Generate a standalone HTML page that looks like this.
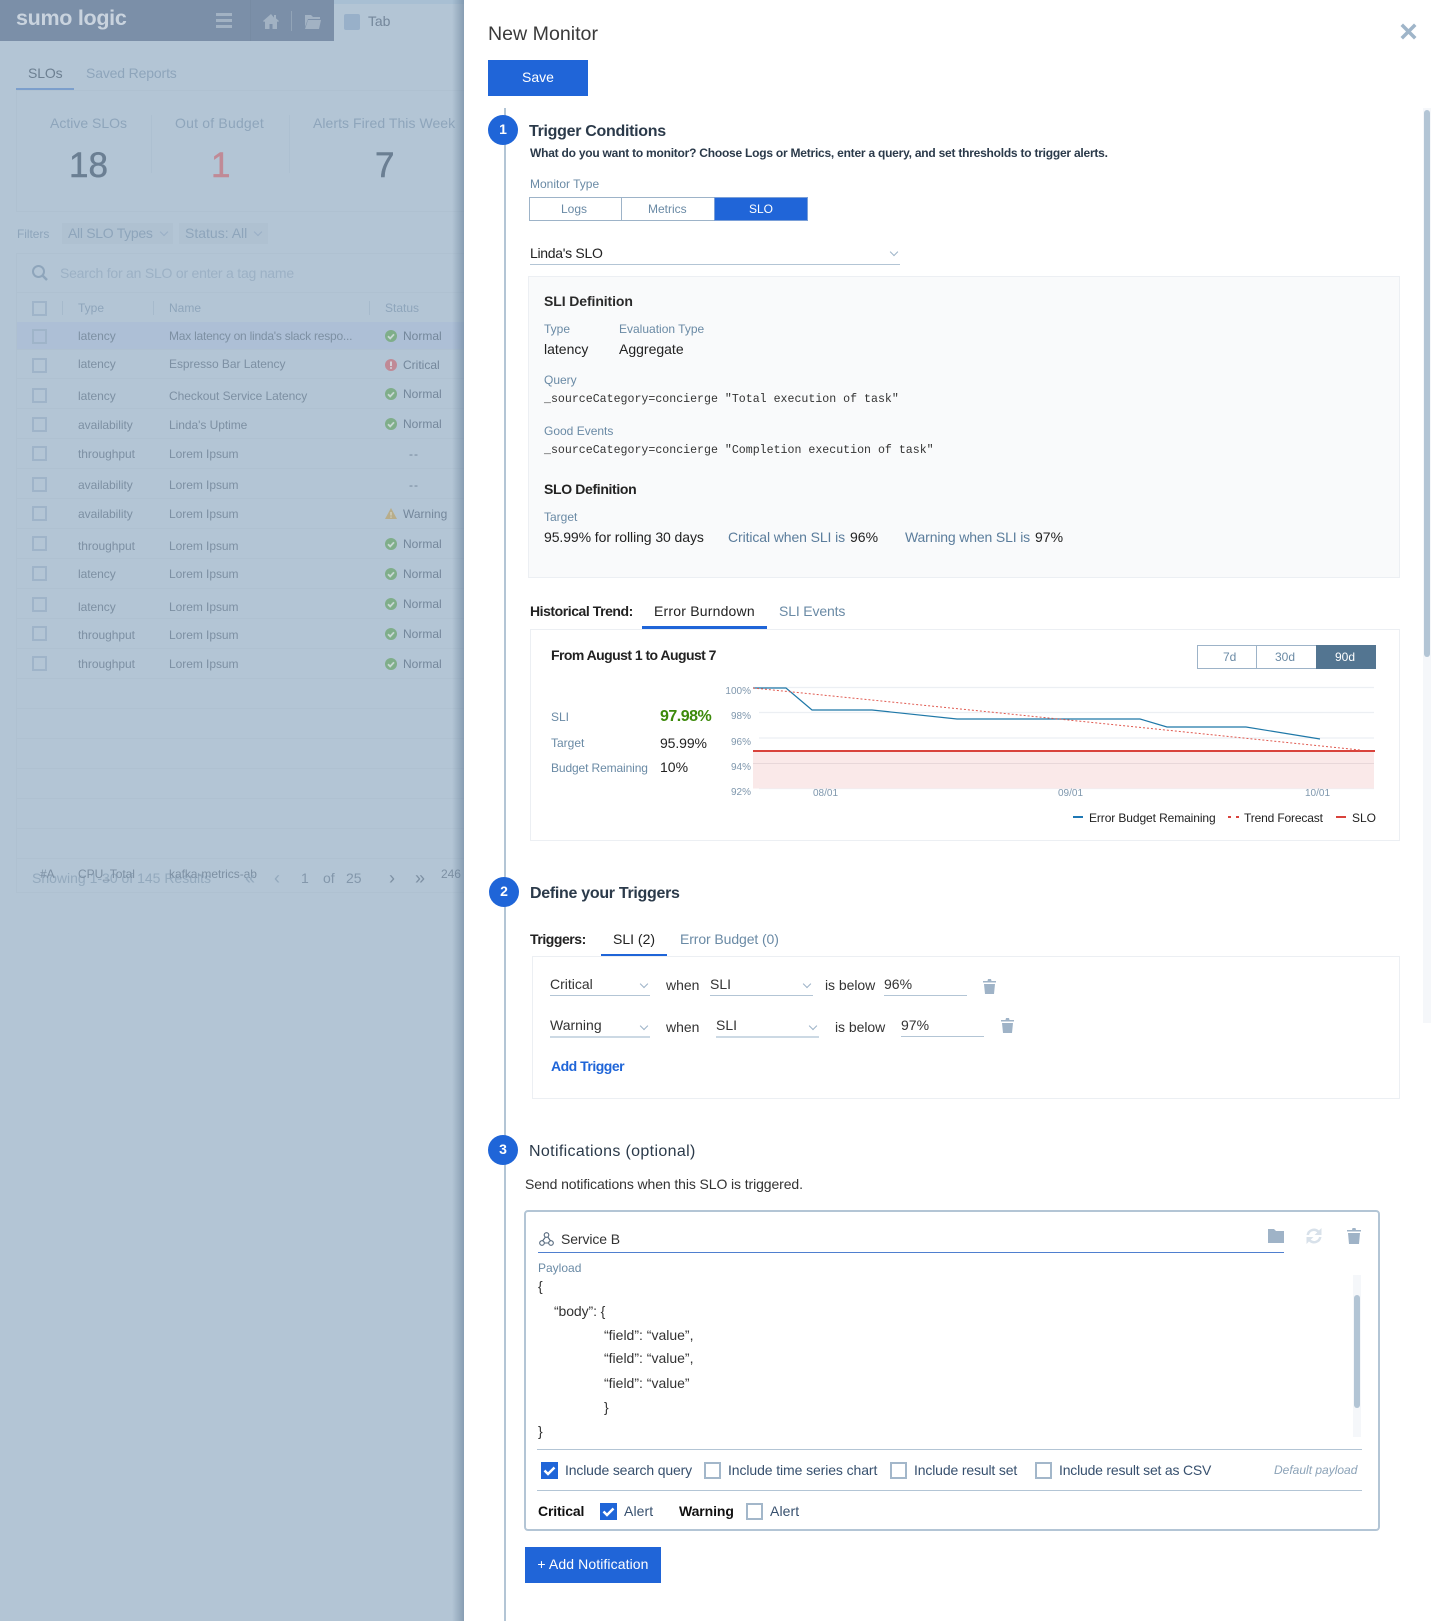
<!DOCTYPE html>
<html><head><meta charset="utf-8"><title>New Monitor</title>
<style>
html,body{margin:0;padding:0}
body{width:1440px;height:1621px;position:relative;overflow:hidden;background:#fff;font-family:"Liberation Sans",sans-serif;color:#222}
.t{position:absolute;white-space:nowrap;line-height:20px;font-size:14px}
.b{position:absolute}
.l{color:#8296ab;font-size:12px}
.s{color:#6a8aa5;font-size:12px}
.m{font-family:"Liberation Mono",monospace;font-size:11.6px;color:#333}
.g{color:#7d90a3;font-size:12px;letter-spacing:-.05px}
.st{color:#74879b;font-size:12px}
.cb{position:absolute;left:32px;width:11px;height:11px;border:2px solid #9fb4c9}
.ln{position:absolute;left:16px;width:448px;height:1px;background:#afc1d1}
.ch{position:absolute;width:5px;height:5px;border-right:1px solid #9db3c8;border-bottom:1px solid #9db3c8;transform:rotate(45deg)}
.u{position:absolute;height:1px;background:#b3c5d5}
.sv{position:absolute;overflow:visible}
.num{position:absolute;width:30px;height:30px;border-radius:50%;background:#1f65d8;color:#fff;font-size:14px;font-weight:bold;text-align:center;line-height:29px}
.h{font-size:16px;font-weight:bold;color:#2b3a4a;letter-spacing:-.3px}
.md{font-weight:bold;font-size:14px;color:#222;letter-spacing:-.35px}
.c{position:absolute;width:13px;height:13px;border:2px solid #a3b7ca;background:#fff}
.k{position:absolute;width:17px;height:17px;background:#1f65d8}
.in{color:#37506e;font-size:14px;letter-spacing:-.15px}
.big{font-size:35px;line-height:40px;-webkit-text-stroke:.5px currentColor}
</style></head><body>

<!-- LEFT dimmed app -->
<div class="b" style="left:0;top:0;width:464px;height:1621px;background:#b3c5d5"></div>
<div class="b" style="left:334px;top:0;width:130px;height:4px;background:#a8bfd3"></div>
<div class="b" style="left:0;top:0;width:334px;height:41px;background:#7b8fa8"></div>
<div class="b" style="left:250px;top:0;width:1px;height:41px;background:#778ba3"></div>
<div class="t" style="left:16px;top:8px;font-size:21.500px;font-weight:bold;color:#c9d3de;letter-spacing:-.3px">sumo logic</div>
<svg class="sv" style="left:216px;top:13px" width="16" height="15"><path d="M0 0h16v3H0zM0 6h16v3H0zM0 12h16v3H0z" fill="#a2b2c3"/></svg>
<svg class="sv" style="left:263px;top:14px" width="16" height="15"><path d="M8 0L0 7l1 1 1-.6V15h4.500v-5h3v5H14V7.400l1 .6 1-1-3-2.600V1h-2v2.600z" fill="#a2b2c3"/></svg>
<div class="b" style="left:291px;top:11px;width:1px;height:20px;background:#92a4b7"></div>
<svg class="sv" style="left:305px;top:14px" width="16" height="15"><path d="M0 1h6l2 2h7v2H3L0 13zM3 6h13l-2 9H0z" fill="#a2b2c3"/></svg>
<div class="b" style="left:344px;top:14px;width:16px;height:16px;background:#98b0c9;border-radius:2px"></div>
<div class="t" style="left:368px;top:11px;color:#74879b;letter-spacing:-.1px">Tab</div>

<div class="t" style="left:28px;top:63px;color:#6d8092;letter-spacing:-.15px">SLOs</div>
<div class="t" style="left:86px;top:63px;color:#8ea5bb;letter-spacing:-.15px">Saved Reports</div>
<div class="b" style="left:16px;top:88px;width:58px;height:3px;background:#7c9fcc"></div>
<div class="b" style="left:16px;top:90px;width:448px;height:122px;border:1px solid #afc1d1;border-right:0;box-sizing:border-box"></div>
<div class="b" style="left:151px;top:115px;width:1px;height:58px;background:#adc0d1"></div>
<div class="b" style="left:289px;top:115px;width:1px;height:58px;background:#adc0d1"></div>
<div class="t" style="left:50px;top:113px;color:#8ea5bb">Active SLOs</div>
<div class="t" style="left:175px;top:113px;color:#8ea5bb;letter-spacing:.2px">Out of Budget</div>
<div class="t" style="left:313px;top:113px;color:#8ea5bb;letter-spacing:.05px">Alerts Fired This Week</div>
<div class="t big" style="left:69px;top:146px;color:#6b7f93">18</div>
<div class="t big" style="left:211px;top:146px;color:#c08a96">1</div>
<div class="t big" style="left:375px;top:146px;color:#6b7f93">7</div>

<div class="t g" style="left:17px;top:224px;color:#8ea5bb">Filters</div>
<div class="b" style="left:62px;top:223px;width:111px;height:21px;background:#afc1d1"></div>
<div class="b" style="left:179px;top:223px;width:89px;height:21px;background:#afc1d1"></div>
<div class="t" style="left:68px;top:223px;color:#8ea5bb;letter-spacing:-.3px">All SLO Types</div>
<div class="t" style="left:185px;top:223px;color:#8ea5bb">Status: All</div>
<div class="ch" style="left:161px;top:229px;border-color:#99afc6"></div>
<div class="ch" style="left:255px;top:229px;border-color:#99afc6"></div>

<div class="b" style="left:16px;top:253px;width:448px;height:40px;border:1px solid #afc1d1;border-right:0;box-sizing:border-box"></div>
<svg class="sv" style="left:32px;top:265px" width="16" height="16"><circle cx="6.500" cy="6.500" r="5.500" fill="none" stroke="#8ea5bb" stroke-width="2"/><path d="M10.500 10.500L15 15" stroke="#8ea5bb" stroke-width="2.500"/></svg>
<div class="t" style="left:60px;top:263px;color:#9cb1c5;letter-spacing:-.22px">Search for an SLO or enter a tag name</div>

<div class="cb" style="top:301px"></div>
<div class="b" style="left:62px;top:301px;width:1px;height:14px;background:#a6bacc"></div>
<div class="b" style="left:153px;top:301px;width:1px;height:14px;background:#a6bacc"></div>
<div class="b" style="left:369px;top:301px;width:1px;height:14px;background:#a6bacc"></div>
<div class="t s" style="left:78px;top:298px;color:#8ea5bb">Type</div>
<div class="t s" style="left:169px;top:298px;color:#8ea5bb">Name</div>
<div class="t s" style="left:385px;top:298px;color:#8ea5bb">Status</div>

<div class="b" style="left:16px;top:322px;width:448px;height:27px;background:#adbfd6"></div>
<div class="ln" style="top:349px"></div><div class="ln" style="top:378px"></div><div class="ln" style="top:408px"></div><div class="ln" style="top:438px"></div><div class="ln" style="top:468px"></div><div class="ln" style="top:498px"></div><div class="ln" style="top:528px"></div><div class="ln" style="top:558px"></div><div class="ln" style="top:588px"></div><div class="ln" style="top:618px"></div><div class="ln" style="top:648px"></div><div class="ln" style="top:678px"></div><div class="ln" style="top:708px"></div><div class="ln" style="top:738px"></div><div class="ln" style="top:768px"></div><div class="ln" style="top:798px"></div><div class="ln" style="top:828px"></div><div class="ln" style="top:858px"></div><div class="ln" style="top:892px"></div>
<div class="b" style="left:16px;top:293px;width:1px;height:600px;background:#afc1d1"></div>

<div class="cb" style="top:329px"></div><div class="t g" style="left:78px;top:326px">latency</div><div class="t g" style="left:169px;top:326px;letter-spacing:-.23px">Max latency on linda's slack respo...</div>
<div class="cb" style="top:358px"></div><div class="t g" style="left:78px;top:354px">latency</div><div class="t g" style="left:169px;top:354px">Espresso Bar Latency</div>
<div class="cb" style="top:388px"></div><div class="t g" style="left:78px;top:386px">latency</div><div class="t g" style="left:169px;top:386px">Checkout Service Latency</div>
<div class="cb" style="top:417px"></div><div class="t g" style="left:78px;top:415px">availability</div><div class="t g" style="left:169px;top:415px">Linda's Uptime</div>
<div class="cb" style="top:446px"></div><div class="t g" style="left:78px;top:444px">throughput</div><div class="t g" style="left:169px;top:444px">Lorem Ipsum</div>
<div class="cb" style="top:477px"></div><div class="t g" style="left:78px;top:475px">availability</div><div class="t g" style="left:169px;top:475px">Lorem Ipsum</div>
<div class="cb" style="top:506px"></div><div class="t g" style="left:78px;top:504px">availability</div><div class="t g" style="left:169px;top:504px">Lorem Ipsum</div>
<div class="cb" style="top:536px"></div><div class="t g" style="left:78px;top:536px">throughput</div><div class="t g" style="left:169px;top:536px">Lorem Ipsum</div>
<div class="cb" style="top:566px"></div><div class="t g" style="left:78px;top:564px">latency</div><div class="t g" style="left:169px;top:564px">Lorem Ipsum</div>
<div class="cb" style="top:597px"></div><div class="t g" style="left:78px;top:597px">latency</div><div class="t g" style="left:169px;top:597px">Lorem Ipsum</div>
<div class="cb" style="top:626px"></div><div class="t g" style="left:78px;top:625px">throughput</div><div class="t g" style="left:169px;top:625px">Lorem Ipsum</div>
<div class="cb" style="top:656px"></div><div class="t g" style="left:78px;top:654px">throughput</div><div class="t g" style="left:169px;top:654px">Lorem Ipsum</div>

<svg width="0" height="0" style="position:absolute"><defs><g id="ok"><circle cx="6" cy="6" r="6" fill="#7fae8a"/><path d="M3 6.200l2.200 2.200L9 4.300" fill="none" stroke="#c8d8d4" stroke-width="1.800"/></g></defs></svg>
<svg class="sv" style="left:385px;top:330px" width="12" height="12"><use href="#ok"/></svg><div class="t st" style="left:403px;top:326px">Normal</div>
<svg class="sv" style="left:385px;top:359px" width="12" height="12"><circle cx="6" cy="6" r="6" fill="#c08a96"/><path d="M6 2.500v4.500M6 8.200v1.500" stroke="#d5d9e0" stroke-width="1.800"/></svg><div class="t st" style="left:403px;top:355px">Critical</div>
<svg class="sv" style="left:385px;top:388px" width="12" height="12"><use href="#ok"/></svg><div class="t st" style="left:403px;top:384px">Normal</div>
<svg class="sv" style="left:385px;top:418px" width="12" height="12"><use href="#ok"/></svg><div class="t st" style="left:403px;top:414px">Normal</div>
<div class="t st" style="left:409px;top:444px;letter-spacing:1px">--</div>
<div class="t st" style="left:409px;top:475px;letter-spacing:1px">--</div>
<svg class="sv" style="left:385px;top:508px" width="12" height="11"><path d="M6 0l6 11H0z" fill="#b8ad8a"/><path d="M6 4v3.500M6 8.500v1.200" stroke="#d5d6c8" stroke-width="1.200"/></svg><div class="t st" style="left:403px;top:504px">Warning</div>
<svg class="sv" style="left:385px;top:538px" width="12" height="12"><use href="#ok"/></svg><div class="t st" style="left:403px;top:534px">Normal</div>
<svg class="sv" style="left:385px;top:568px" width="12" height="12"><use href="#ok"/></svg><div class="t st" style="left:403px;top:564px">Normal</div>
<svg class="sv" style="left:385px;top:598px" width="12" height="12"><use href="#ok"/></svg><div class="t st" style="left:403px;top:594px">Normal</div>
<svg class="sv" style="left:385px;top:628px" width="12" height="12"><use href="#ok"/></svg><div class="t st" style="left:403px;top:624px">Normal</div>
<svg class="sv" style="left:385px;top:658px" width="12" height="12"><use href="#ok"/></svg><div class="t st" style="left:403px;top:654px">Normal</div>

<div class="t" style="left:32px;top:868px;color:#93a9bd;font-size:14px">Showing 1-30 of 145 Results</div>
<div class="t g" style="left:40px;top:864px">#A</div>
<div class="t g" style="left:78px;top:864px">CPU_Total</div>
<div class="t g" style="left:169px;top:864px">kafka-metrics-ab</div>
<div class="t g" style="left:441px;top:864px">246</div>
<div class="t" style="left:245px;top:868px;color:#93a9bd;font-size:18px">«</div>
<div class="t" style="left:274px;top:868px;color:#93a9bd;font-size:18px">‹</div>
<div class="t" style="left:301px;top:868px;color:#8397ab">1</div>
<div class="t" style="left:323px;top:868px;color:#8397ab">of</div>
<div class="t" style="left:346px;top:868px;color:#8397ab">25</div>
<div class="t" style="left:389px;top:868px;color:#7d90a3;font-size:18px">›</div>
<div class="t" style="left:415px;top:868px;color:#7d90a3;font-size:18px">»</div>

<!-- Panel shadow -->
<div class="b" style="left:452px;top:0;width:12px;height:1621px;background:linear-gradient(to right,rgba(100,125,150,0),rgba(100,125,150,.55))"></div>

<!-- RIGHT panel -->
<div class="b" style="left:464px;top:0;width:976px;height:1621px;background:#fff"></div>
<div class="b" style="left:1423px;top:108px;width:8px;height:915px;background:#f5f7fa"></div>
<div class="b" style="left:1424px;top:110px;width:6px;height:547px;background:#b3c5d5;border-radius:3px"></div>
<svg class="sv" style="left:1401px;top:24px" width="15" height="15"><path d="M2 2l11 11M13 2L2 13" stroke="#9fb5c9" stroke-width="3.500" stroke-linecap="square"/></svg>

<div class="t" style="left:488px;top:24px;font-size:19.600px;color:#3a3a3a">New Monitor</div>
<div class="b" style="left:488px;top:60px;width:100px;height:36px;background:#2065d8;color:#fff;font-size:14px;text-align:center;line-height:34px">Save</div>

<div class="b" style="left:504px;top:108px;width:1.500px;height:1513px;background:#b3c5d5"></div>
<div class="num" style="left:488px;top:115px">1</div>
<div class="t h" style="left:529px;top:122px">Trigger Conditions</div>
<div class="t" style="left:530px;top:143px;font-size:12px;font-weight:bold;color:#2b3a4a;letter-spacing:-.23px">What do you want to monitor? Choose Logs or Metrics, enter a query, and set thresholds to trigger alerts.</div>
<div class="t s" style="left:530px;top:174px">Monitor Type</div>
<div class="b" style="left:529px;top:197px;width:278px;height:24px;border:1px solid #9db3c8;box-sizing:border-box"></div>
<div class="b" style="left:621px;top:197px;width:1px;height:24px;background:#9db3c8"></div>
<div class="b" style="left:714px;top:197px;width:94px;height:24px;background:#2065d8;border:1px solid #7a9fd8;box-sizing:border-box"></div>
<div class="t s" style="left:561px;top:199px">Logs</div>
<div class="t s" style="left:648px;top:199px">Metrics</div>
<div class="t" style="left:749px;top:199px;font-size:12px;color:#fff">SLO</div>
<div class="t" style="left:530px;top:243px;letter-spacing:-.3px">Linda's SLO</div>
<div class="ch" style="left:891px;top:249px"></div>
<div class="u" style="left:530px;top:264px;width:370px"></div>

<div class="b" style="left:528px;top:276px;width:872px;height:302px;background:#f9fafb;border:1px solid #eceff3;box-sizing:border-box"></div>
<div class="t md" style="left:544px;top:291px;letter-spacing:-.1px;font-weight:bold;color:#2a2a2a">SLI Definition</div>
<div class="t s" style="left:544px;top:319px">Type</div>
<div class="t s" style="left:619px;top:319px">Evaluation Type</div>
<div class="t" style="left:544px;top:339px">latency</div>
<div class="t" style="left:619px;top:339px">Aggregate</div>
<div class="t s" style="left:544px;top:370px">Query</div>
<div class="t m" style="left:544px;top:390px">_sourceCategory=concierge "Total execution of task"</div>
<div class="t s" style="left:544px;top:421px">Good Events</div>
<div class="t m" style="left:544px;top:441px">_sourceCategory=concierge "Completion execution of task"</div>
<div class="t md" style="left:544px;top:479px">SLO Definition</div>
<div class="t s" style="left:544px;top:507px">Target</div>
<div class="t" style="left:544px;top:527px;letter-spacing:-.08px">95.99% for rolling 30 days</div>
<div class="t" style="left:728px;top:527px;color:#5b7d9c;letter-spacing:-.1px">Critical when SLI is</div>
<div class="t" style="left:850px;top:527px">96%</div>
<div class="t" style="left:905px;top:527px;color:#5b7d9c;letter-spacing:-.15px">Warning when SLI is</div>
<div class="t" style="left:1035px;top:527px">97%</div>

<div class="t md" style="left:530px;top:601px;letter-spacing:-.45px">Historical Trend:</div>
<div class="t" style="left:654px;top:601px;letter-spacing:.2px">Error Burndown</div>
<div class="t" style="left:779px;top:601px;color:#6a8aa5;letter-spacing:-.15px">SLI Events</div>
<div class="b" style="left:642px;top:626px;width:125px;height:3px;background:#1f65d8"></div>
<div class="b" style="left:530px;top:629px;width:870px;height:212px;border:1px solid #eceff3;box-sizing:border-box"></div>
<div class="t md" style="left:551px;top:645px;letter-spacing:-.55px">From August 1 to August 7</div>
<div class="b" style="left:1197px;top:645px;width:179px;height:24px;border:1px solid #9db3c8;box-sizing:border-box"></div>
<div class="b" style="left:1256px;top:645px;width:1px;height:24px;background:#9db3c8"></div>
<div class="b" style="left:1316px;top:645px;width:60px;height:24px;background:#537591"></div>
<div class="t s" style="left:1223px;top:647px">7d</div>
<div class="t s" style="left:1275px;top:647px">30d</div>
<div class="t" style="left:1335px;top:647px;font-size:12px;color:#fff">90d</div>

<div class="t s" style="left:551px;top:707px">SLI</div>
<div class="t s" style="left:551px;top:733px">Target</div>
<div class="t s" style="left:551px;top:758px;letter-spacing:-.12px">Budget Remaining</div>
<div class="t" style="left:660px;top:707px;font-size:16px;font-weight:bold;color:#3c8a0a;letter-spacing:-.5px">97.98%</div>
<div class="t" style="left:660px;top:733px;letter-spacing:-.1px">95.99%</div>
<div class="t" style="left:660px;top:757px">10%</div>

<svg class="sv" style="left:0;top:0" width="1440" height="850">
<path d="M753 687.500H1374M759 712.500H1374M759 738H1374M759 763.500H1374M759 788.500H1374" stroke="#eceff3" stroke-width="1.200" fill="none"/>
<rect x="753" y="751" width="621" height="37.500" fill="#fae9e9"/>
<path d="M753 763.500H1374" stroke="#e8d7d9" stroke-width="1"/>
<path d="M753 751H1375" stroke="#d9433c" stroke-width="2"/>
<path d="M753 688L786 688 812 710 872 710 957 719 1140 719 1167 727 1246 727 1320 739" fill="none" stroke="#1f78a8" stroke-width="1.200"/>
<path d="M753 688L1000 713 1360 750" fill="none" stroke="#e05a50" stroke-width="1" stroke-dasharray="2 2"/>
<path d="M1073 817h10" stroke="#1f78b4" stroke-width="2"/>
<path d="M1228 817h3M1236 817h3" stroke="#d9433c" stroke-width="2"/>
<path d="M1336 817h10" stroke="#d9433c" stroke-width="2"/>
<text x="751" y="694" font-size="10" text-anchor="end" fill="#7f97ad" font-family="Liberation Sans">100%</text>
<text x="751" y="719" font-size="10" text-anchor="end" fill="#7f97ad" font-family="Liberation Sans">98%</text>
<text x="751" y="745" font-size="10" text-anchor="end" fill="#7f97ad" font-family="Liberation Sans">96%</text>
<text x="751" y="770" font-size="10" text-anchor="end" fill="#7f97ad" font-family="Liberation Sans">94%</text>
<text x="751" y="795" font-size="10" text-anchor="end" fill="#7f97ad" font-family="Liberation Sans">92%</text>
<text x="813" y="796" font-size="10" fill="#7f97ad" font-family="Liberation Sans">08/01</text>
<text x="1058" y="796" font-size="10" fill="#7f97ad" font-family="Liberation Sans">09/01</text>
<text x="1305" y="796" font-size="10" fill="#7f97ad" font-family="Liberation Sans">10/01</text>
</svg>
<div class="t" style="left:1089px;top:808px;font-size:12px;color:#222;letter-spacing:-.1px">Error Budget Remaining</div>
<div class="t" style="left:1244px;top:808px;font-size:12px;color:#222;letter-spacing:-.15px">Trend Forecast</div>
<div class="t" style="left:1352px;top:808px;font-size:12px;color:#222">SLO</div>

<!-- Section 2 -->
<div class="num" style="left:489px;top:877px">2</div>
<div class="t h" style="left:530px;top:884px">Define your Triggers</div>
<div class="t md" style="left:530px;top:929px;letter-spacing:-.45px">Triggers:</div>
<div class="t" style="left:613px;top:929px">SLI (2)</div>
<div class="t" style="left:680px;top:929px;color:#6a8aa5;letter-spacing:-.1px">Error Budget (0)</div>
<div class="b" style="left:601px;top:954px;width:66px;height:3px;background:#1f65d8"></div>
<div class="b" style="left:532px;top:956px;width:868px;height:143px;border:1px solid #eceff3;box-sizing:border-box"></div>

<div class="t" style="left:550px;top:974px;color:#333">Critical</div>
<div class="u" style="left:550px;top:995px;width:100px"></div><div class="ch" style="left:641px;top:981px"></div>
<div class="t" style="left:666px;top:975px;color:#333">when</div>
<div class="t" style="left:710px;top:974px;color:#333">SLI</div>
<div class="u" style="left:710px;top:995px;width:103px"></div><div class="ch" style="left:804px;top:981px"></div>
<div class="t" style="left:825px;top:975px;color:#333;letter-spacing:-.05px">is below</div>
<div class="t" style="left:884px;top:974px;color:#333">96%</div>
<div class="u" style="left:884px;top:995px;width:83px"></div>
<svg class="sv" style="left:983px;top:979px" width="13" height="15"><path d="M0 2h4.500l.500-2h3l.500 2H13v1.500H0zM1 5h11l-1 10H2z" fill="#9fb3c7"/></svg>

<div class="t" style="left:550px;top:1015px;color:#333">Warning</div>
<div class="u" style="left:550px;top:1036px;width:100px;background:#ccd9e4;height:2px"></div><div class="ch" style="left:641px;top:1023px"></div>
<div class="t" style="left:666px;top:1017px;color:#333">when</div>
<div class="t" style="left:716px;top:1015px;color:#333">SLI</div>
<div class="u" style="left:716px;top:1036px;width:103px;background:#ccd9e4;height:2px"></div><div class="ch" style="left:810px;top:1023px"></div>
<div class="t" style="left:835px;top:1017px;color:#333;letter-spacing:-.05px">is below</div>
<div class="t" style="left:901px;top:1015px;color:#333">97%</div>
<div class="u" style="left:901px;top:1036px;width:83px"></div>
<svg class="sv" style="left:1001px;top:1018px" width="13" height="15"><path d="M0 2h4.500l.500-2h3l.500 2H13v1.500H0zM1 5h11l-1 10H2z" fill="#9fb3c7"/></svg>
<div class="t" style="left:551px;top:1056px;font-weight:bold;color:#1f65d8;letter-spacing:-.5px">Add Trigger</div>

<!-- Section 3 -->
<div class="num" style="left:488px;top:1135px">3</div>
<div class="t" style="left:529px;top:1142px;font-size:16px;color:#2b3a4a;letter-spacing:.35px">Notifications (optional)</div>
<div class="t" style="left:525px;top:1174px;color:#333;letter-spacing:-.1px">Send notifications when this SLO is triggered.</div>

<div class="b" style="left:524px;top:1210px;width:856px;height:321px;border:2px solid #b3c5d5;border-radius:4px;box-sizing:border-box"></div>
<svg class="sv" style="left:539px;top:1232px" width="15" height="14"><g fill="none" stroke="#55687c" stroke-width="1.100"><circle cx="7.500" cy="3" r="2.300"/><circle cx="3" cy="11" r="2.300"/><circle cx="12" cy="11" r="2.300"/><path d="M6.500 5L3.500 9M5.300 11h4.400M8.800 5l2.800 4"/></g></svg>
<div class="t" style="left:561px;top:1229px;color:#333;letter-spacing:-.1px">Service B</div>
<div class="b" style="left:538px;top:1252px;width:746px;height:1px;background:#4f7fcf"></div>
<svg class="sv" style="left:1268px;top:1229px" width="16" height="14"><path d="M0 0h6l2 2h8v12H0z" fill="#9fb3c7"/></svg>
<svg class="sv" style="left:1305px;top:1227px" width="18" height="18"><path d="M1.500 8a7.500 7.500 0 0 1 12.500-4.500L16.500 1v7h-7l2.800-2.600A5 5 0 0 0 4 8zM16.500 10a7.500 7.500 0 0 1-12.500 4.500L1.500 17v-7h7l-2.800 2.600A5 5 0 0 0 14 10z" fill="#d8e1ea"/></svg>
<svg class="sv" style="left:1347px;top:1228px" width="14" height="16"><path d="M0 2h5l.500-2h3l.500 2h5v1.500H0zM1 5h12l-1 11H2z" fill="#9fb3c7"/></svg>
<div class="t s" style="left:538px;top:1258px">Payload</div>
<div class="t" style="left:538px;top:1276px;color:#333">{</div>
<div class="t" style="left:554px;top:1301px;color:#333;letter-spacing:-.1px">“body”: {</div>
<div class="t" style="left:604px;top:1325px;color:#333">“field”: “value”,</div>
<div class="t" style="left:604px;top:1348px;color:#333">“field”: “value”,</div>
<div class="t" style="left:604px;top:1373px;color:#333">“field”: “value”</div>
<div class="t" style="left:604px;top:1397px;color:#333">}</div>
<div class="t" style="left:538px;top:1421px;color:#333">}</div>
<div class="b" style="left:1353px;top:1275px;width:8px;height:162px;background:#f5f7fa"></div>
<div class="b" style="left:1354px;top:1295px;width:6px;height:113px;background:#b3c5d5;border-radius:3px"></div>
<div class="u" style="left:537px;top:1449px;width:825px"></div>
<div class="u" style="left:537px;top:1490px;width:825px"></div>

<svg width="0" height="0" style="position:absolute"><defs><path id="tick" d="M3.500 8.500l3.500 3.500 6.500-6.500" fill="none" stroke="#fff" stroke-width="2.500"/></defs></svg>
<div class="k" style="left:541px;top:1462px"><svg width="17" height="17"><use href="#tick"/></svg></div>
<div class="t in" style="left:565px;top:1460px">Include search query</div>
<div class="c" style="left:704px;top:1462px"></div>
<div class="t in" style="left:728px;top:1460px;letter-spacing:-.1px">Include time series chart</div>
<div class="c" style="left:890px;top:1462px"></div>
<div class="t in" style="left:914px;top:1460px">Include result set</div>
<div class="c" style="left:1035px;top:1462px"></div>
<div class="t in" style="left:1059px;top:1460px;letter-spacing:-.2px">Include result set as CSV</div>
<div class="t" style="left:1274px;top:1460px;font-size:12px;font-style:italic;color:#8ca3b8">Default payload</div>
<div class="t" style="left:538px;top:1501px;font-weight:bold;color:#111;letter-spacing:-.15px">Critical</div>
<div class="k" style="left:600px;top:1503px"><svg width="17" height="17"><use href="#tick"/></svg></div>
<div class="t in" style="left:624px;top:1501px;letter-spacing:.1px">Alert</div>
<div class="t" style="left:679px;top:1501px;font-weight:bold;color:#111;letter-spacing:-.1px">Warning</div>
<div class="c" style="left:746px;top:1503px"></div>
<div class="t in" style="left:770px;top:1501px;letter-spacing:.1px">Alert</div>
<div class="b" style="left:525px;top:1547px;width:136px;height:36px;background:#2065d8;color:#fff;font-size:14px;text-align:center;line-height:34px;letter-spacing:.1px">+ Add Notification</div>
</body></html>
